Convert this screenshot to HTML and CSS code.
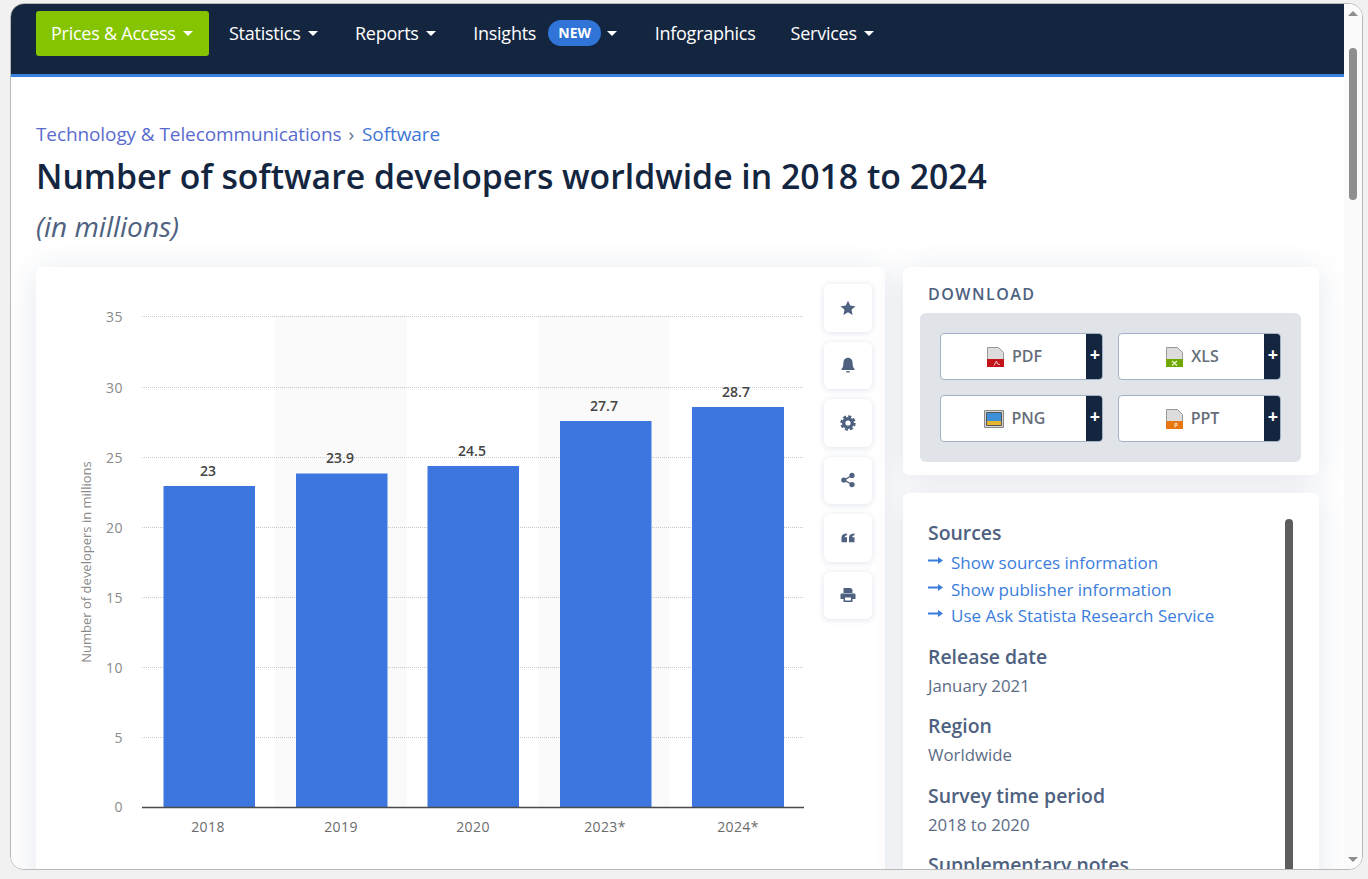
FILE: index.html
```html
<!DOCTYPE html>
<html lang="en">
<head>
  <meta charset="UTF-8">
  <title>Number of software developers worldwide</title>
  <link rel="stylesheet" href="styles.css">
</head>
<body>
  <div class="window">
    <div class="page">
      <nav class="nav">
        <a class="nav-item nav-access">Prices &amp; Access<i class="caret"></i></a>
        <a class="nav-item">Statistics<i class="caret"></i></a>
        <a class="nav-item">Reports<i class="caret"></i></a>
        <a class="nav-item nav-insights">Insights<span class="badge">NEW</span><i class="caret"></i></a>
        <a class="nav-item nav-info">Infographics</a>
        <a class="nav-item">Services<i class="caret"></i></a>
      </nav>

      <main class="content">
        <div class="crumbs"><a class="crumb-first">Technology &amp; Telecommunications</a><span class="crumb-sep">›</span><a>Software</a></div>
        <h1>Number of software developers worldwide in 2018 to 2024</h1>
        <p class="subtitle">(in millions)</p>

        <div class="columns">
          <section class="card chart-card">
            <svg class="chart" width="788" height="602" viewBox="36 267 788 602">
              <rect class="band" x="275" y="316" width="132" height="492"/>
              <rect class="band" x="538" y="316" width="132" height="492"/>
              <g class="grid">
                <line x1="142" x2="804" y1="316.5" y2="316.5"/>
                <line x1="142" x2="804" y1="387.5" y2="387.5"/>
                <line x1="142" x2="804" y1="457.5" y2="457.5"/>
                <line x1="142" x2="804" y1="527.5" y2="527.5"/>
                <line x1="142" x2="804" y1="597.5" y2="597.5"/>
                <line x1="142" x2="804" y1="667.5" y2="667.5"/>
                <line x1="142" x2="804" y1="737.5" y2="737.5"/>
              </g>
              <g class="bars">
                <rect x="163.5" y="486" width="91.5" height="322"/>
                <rect x="296" y="473.5" width="91.5" height="334.5"/>
                <rect x="427.5" y="466" width="91.5" height="342"/>
                <rect x="560" y="421" width="91.5" height="387"/>
                <rect x="692" y="407" width="92" height="401"/>
              </g>
              <line class="axis" x1="142" x2="804" y1="807.5" y2="807.5"/>
              <g class="y-labels">
                <text x="123" y="322">35</text>
                <text x="123" y="393">30</text>
                <text x="123" y="463">25</text>
                <text x="123" y="533">20</text>
                <text x="123" y="603">15</text>
                <text x="123" y="673">10</text>
                <text x="123" y="743">5</text>
                <text x="123" y="812">0</text>
              </g>
              <text class="y-title" transform="translate(91 562) rotate(-90)">Number of developers in millions</text>
              <g class="values">
                <text x="208" y="476">23</text>
                <text x="340" y="463">23.9</text>
                <text x="472" y="456">24.5</text>
                <text x="604" y="411">27.7</text>
                <text x="736" y="397">28.7</text>
              </g>
              <g class="x-labels">
                <text x="208" y="832">2018</text>
                <text x="341" y="832">2019</text>
                <text x="473" y="832">2020</text>
                <text x="605" y="832">2023*</text>
                <text x="738" y="832">2024*</text>
              </g>
            </svg>
            <div class="tools">
              <button class="tool"><svg viewBox="0 0 16 16" width="16" height="16"><polygon points="8,.8 10.2,5.6 15.4,6.2 11.5,9.7 12.6,14.9 8,12.3 3.4,14.9 4.5,9.7 .6,6.2 5.8,5.6"/></svg></button>
              <button class="tool"><svg viewBox="0 0 16 16" width="16" height="16"><path d="M8 .8c-3 0-4.6 2.4-4.6 5.2 0 3.2-.6 4.600-1.900 5.900v1h13v-1c-1.300-1.300-1.900-2.700-1.900-5.900C12.600 3.200 11 .8 8 .8z"/><rect x="6.200" y="14.200" width="3.600" height="1.300"/></svg></button>
              <button class="tool"><svg viewBox="0 0 16 16" width="16" height="16"><circle class="gear-teeth" cx="8" cy="8" r="6.600"/><circle class="gear-ring" cx="8" cy="8" r="4.300"/></svg></button>
              <button class="tool"><svg viewBox="0 0 16 16" width="16" height="16"><path class="share-lines" d="M12 3.500 4 8l8 4.500"/><circle cx="12" cy="3.400" r="2.600"/><circle cx="3.800" cy="8" r="2.600"/><circle cx="12" cy="12.600" r="2.600"/></svg></button>
              <button class="tool"><svg viewBox="0 0 16 16" width="16" height="16"><path d="M7 3.500v1.800c-1.300 0-2.200.7-2.300 2H7v5H1.500V7.500C1.500 5 3.500 3.500 7 3.500zM14.500 3.500v1.800c-1.300 0-2.200.7-2.300 2h2.300v5H9V7.500C9 5 11 3.500 14.500 3.500z"/></svg></button>
              <button class="tool"><svg viewBox="0 0 16 16" width="16" height="16"><path d="M3.500 1h7.200l1.800 1.800V6h-9zM1.700 6.500h12.600c.7 0 1.200.5 1.200 1.200V12h-3v3h-9v-3h-3V7.700c0-.7.5-1.200 1.200-1.200zM5 10.500v3h6v-3z" fill-rule="evenodd"/></svg></button>
            </div>
          </section>

          <aside class="side">
            <section class="card download">
              <h2>DOWNLOAD</h2>
              <div class="download-box">
                <a class="file-btn"><span class="file-label">
                  <svg viewBox="0 0 17 20" width="17" height="20"><path fill="#dcdcdc" stroke="#999" d="M.5.500h11l5 5v14H.5z"/><path fill="#c4141a" d="M0 12h17v8H0z"/><path fill="none" stroke="#f4c9c9" d="M7 18.500 9.500 14l1 3 2.500.5"/></svg>PDF</span><span class="file-plus">+</span></a>
                <a class="file-btn"><span class="file-label">
                  <svg viewBox="0 0 17 20" width="17" height="20"><path fill="#dcdcdc" stroke="#999" d="M.5.500h11l5 5v14H.5z"/><path fill="#6ea800" d="M0 12h17v8H0z"/><path fill="none" stroke="#e6f2c8" stroke-width="1.500" d="M6 14l5 4.500M11 14l-5 4.500"/></svg>XLS</span><span class="file-plus">+</span></a>
                <a class="file-btn"><span class="file-label">
                  <svg viewBox="0 0 20 20" width="20" height="20"><path fill="#d5d5d5" stroke="#888" d="M.5 1.500h19v17H.5z"/><path fill="#3d8fd6" d="M3 4h14v8H3z"/><path fill="#e6b52e" d="M3 12h14v4H3z"/><path fill="none" stroke="#555" d="M2.500 3.500h15v13h-15z"/></svg>PNG</span><span class="file-plus">+</span></a>
                <a class="file-btn"><span class="file-label">
                  <svg viewBox="0 0 17 20" width="17" height="20"><path fill="#dcdcdc" stroke="#999" d="M.5.500h11l5 5v14H.5z"/><path fill="#e8770f" d="M0 12h17v8H0z"/><path fill="none" stroke="#fbe0c4" d="M9 18.500V14.500h2v2H9"/></svg>PPT</span><span class="file-plus">+</span></a>
              </div>
            </section>

            <section class="card details">
              <div class="details-text">
                <h3 class="first">Sources</h3>
                <a class="source-link"><svg viewBox="0 0 15 10" width="15" height="10"><path d="M0 3.500h10V1l5 3.500L10 8V5.500H0z"/></svg>Show sources information</a>
                <a class="source-link"><svg viewBox="0 0 15 10" width="15" height="10"><path d="M0 3.500h10V1l5 3.500L10 8V5.500H0z"/></svg>Show publisher information</a>
                <a class="source-link"><svg viewBox="0 0 15 10" width="15" height="10"><path d="M0 3.500h10V1l5 3.500L10 8V5.500H0z"/></svg>Use Ask Statista Research Service</a>
                <h3>Release date</h3>
                <p>January 2021</p>
                <h3>Region</h3>
                <p>Worldwide</p>
                <h3>Survey time period</h3>
                <p>2018 to 2020</p>
                <h3>Supplementary notes</h3>
              </div>
              <div class="details-thumb"></div>
            </section>
          </aside>
        </div>
      </main>
    </div>

    <div class="scrollbar">
      <i class="arrow-up"></i>
      <div class="scroll-thumb"></div>
      <i class="arrow-down"></i>
    </div>
  </div>
</body>
</html>
```

FILE: styles.css
```css
* {
  box-sizing: border-box;
}
html, body {
  height: 100%;
  margin: 0;
  overflow: hidden;
}
body {
  font-family: "Open Sans", sans-serif;
  background: #f1f1f1;
  padding: 3px 5px 9px 10px;
}
a {
  color: inherit;
}
.window {
  display: flex;
  height: 867px;
  border: 1px solid #b9b9b9;
  border-radius: 14px;
  background: #fff;
  overflow: hidden;
}
.page {
  flex: 1;
  min-width: 0;
  overflow: hidden;
}

/* top nav */
.nav {
  display: flex;
  align-items: center;
  height: 73px;
  padding: 0 0 12px 25px;
  background: #14263f;
  border-bottom: 3px solid #3b82e0;
  color: #fff;
  font-size: 18px;
  letter-spacing: -0.25px;
}
.nav-item {
  display: flex;
  align-items: center;
  margin-right: 37.5px;
}
.nav-access {
  width: 173px;
  height: 45px;
  padding: 0 0 0 15px;
  margin-right: 20px;
  background: #85c400;
  border-radius: 3px;
}
.nav-info {
  margin-right: 35px;
}
.caret {
  width: 0;
  height: 0;
  margin-left: 7px;
  border-left: 5px solid transparent;
  border-right: 5px solid transparent;
  border-top: 5px solid #fff;
}
.nav-insights .caret {
  margin-left: 6px;
}
.badge {
  display: inline-block;
  width: 53px;
  height: 26px;
  margin: 0 0 0 12px;
  border-radius: 13px;
  background: #2f74d6;
  font-size: 14px;
  font-weight: 700;
  line-height: 25px;
  text-align: center;
  letter-spacing: 0;
}

/* heading */
.content {
  padding: 45px 25px 0;
  background: #fff;
}
.crumbs {
  font-size: 19px;
  line-height: 25px;
  letter-spacing: -0.1px;
  color: #3f77d8;
}
.crumb-first {
  color: #5a6bd0;
}
.crumb-sep {
  margin: 0 8px 0 7px;
  color: #66758c;
}
h1 {
  margin: 7px 0 0;
  font-size: 33.75px;
  line-height: 44px;
  font-weight: 600;
  color: #14263f;
}
.subtitle {
  margin: 11px 0 0;
  font-size: 28px;
  line-height: 34px;
  font-style: italic;
  color: #4e6180;
}

.columns {
  display: flex;
  align-items: flex-start;
  gap: 18px;
  margin-top: 24px;
}
.card {
  background: #fff;
  border-radius: 6px;
  box-shadow: 0 4px 32px rgba(30, 60, 110, 0.12);
}

/* chart */
.chart-card {
  display: flex;
  width: 849px;
  height: 640px;
}
.chart {
  display: block;
  flex: none;
}
.band {
  fill: #fafafa;
}
.grid line {
  stroke: #c8c8c8;
  stroke-width: 1;
  stroke-dasharray: 1 1;
}
.bars rect {
  fill: #3d76df;
}
.axis {
  stroke: #4a4a4a;
  stroke-width: 1.5;
}
.chart text {
  font-family: "Open Sans", sans-serif;
}
.y-labels text {
  font-size: 14px;
  fill: #8a8a8a;
  text-anchor: end;
  letter-spacing: 0.5px;
}
.y-title {
  font-size: 13px;
  fill: #8a8a8a;
  text-anchor: middle;
}
.values text {
  font-size: 14px;
  font-weight: 600;
  fill: #444;
  text-anchor: middle;
}
.x-labels text {
  font-size: 14px;
  fill: #6b6b6b;
  text-anchor: middle;
  letter-spacing: 0.4px;
}

.tools {
  display: flex;
  flex-direction: column;
  gap: 10px;
  padding-top: 17px;
}
.tool {
  display: flex;
  align-items: center;
  justify-content: center;
  width: 48px;
  height: 47.5px;
  padding: 0;
  border: 0;
  border-radius: 6px;
  background: #fff;
  box-shadow: 0 1px 6px rgba(30, 60, 110, 0.14);
}
.tool svg {
  fill: #4e6180;
}
.gear-teeth {
  fill: none;
  stroke: #4e6180;
  stroke-width: 2.2;
  stroke-dasharray: 3.1 2.08;
}
.gear-ring {
  fill: none;
  stroke: #4e6180;
  stroke-width: 3.4;
}
.share-lines {
  fill: none;
  stroke: #4e6180;
  stroke-width: 1.4;
}

/* right column */
.side {
  width: 416px;
  display: flex;
  flex-direction: column;
  gap: 18px;
}
.download {
  height: 208px;
  padding: 16px 18px 0 17px;
}
h2 {
  margin: 0 0 0 8px;
  font-size: 16px;
  line-height: 22px;
  font-weight: 600;
  letter-spacing: 1.5px;
  color: #4e6180;
}
.download-box {
  display: grid;
  grid-template-columns: 163px 163px;
  grid-template-rows: 47px 47px;
  justify-content: space-between;
  align-content: space-between;
  height: 149px;
  margin-top: 8px;
  padding: 20px;
  background: #e0e3e7;
  border-radius: 6px;
}
.file-btn {
  display: flex;
  border: 1px solid #a3b1c6;
  border-radius: 4px;
  background: #fff;
  overflow: hidden;
}
.file-label {
  flex: 1;
  display: flex;
  align-items: center;
  justify-content: center;
  gap: 8px;
  padding: 0 0 2px 2px;
  font-size: 16px;
  font-weight: 600;
  color: #666e79;
}
.file-label svg {
  margin-top: 2px;
}
.file-plus {
  width: 16px;
  padding-left: 2px;
  background: #14263f;
  color: #fff;
  font-size: 18px;
  font-weight: 700;
  line-height: 40px;
  text-align: center;
}

.details {
  display: flex;
  justify-content: space-between;
  height: 420px;
  padding: 27px 26px 0 25px;
}
.details-thumb {
  width: 8px;
  height: 400px;
  margin-top: -1px;
  border-radius: 4px 4px 0 0;
  background: #5c5e5e;
}
h3 {
  margin: 15.3px 0 0;
  font-size: 19.4px;
  line-height: 25px;
  font-weight: 600;
  color: #4e6180;
}
h3.first {
  margin: 0 0 5px;
}
.source-link + h3 {
  margin-top: 16px;
}
.details p {
  margin: 4px 0 0;
  font-size: 16.8px;
  line-height: 25px;
  color: #5c6c85;
}
.source-link {
  display: flex;
  align-items: center;
  margin-top: 1.6px;
  font-size: 17px;
  line-height: 25px;
  color: #3b7ddd;
}
.source-link svg {
  margin: 0 8px 3px 0;
  fill: #3b7ddd;
}

/* window scrollbar */
.scrollbar {
  position: relative;
  flex: none;
  width: 18px;
  background: #fbfbfb;
}
.arrow-up,
.arrow-down {
  position: absolute;
  left: 4px;
  width: 0;
  height: 0;
  border-left: 5px solid transparent;
  border-right: 5px solid transparent;
}
.arrow-up {
  top: 7px;
  border-bottom: 5px solid #8e8e8e;
}
.arrow-down {
  bottom: 7px;
  border-top: 5px solid #8e8e8e;
}
.scroll-thumb {
  position: absolute;
  top: 44px;
  left: 5px;
  width: 8px;
  height: 152px;
  border-radius: 4px;
  background: #8f8f8f;
}
```
